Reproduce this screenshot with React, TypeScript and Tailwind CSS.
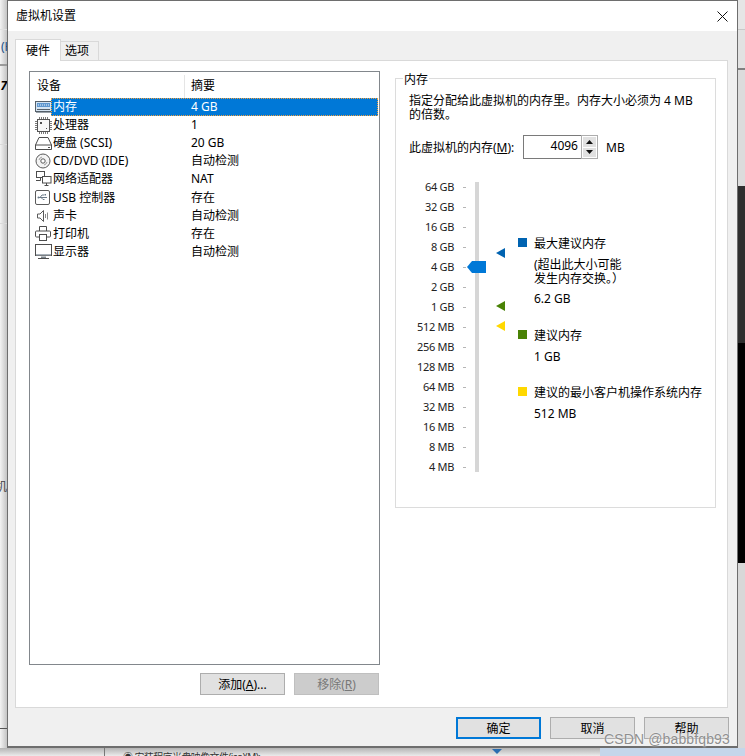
const FONT = "font-['Noto_Sans','Noto_Sans_CJK_SC',sans-serif]";

const Memory = () => (
  <svg width="17" height="13" viewBox="0 0 17 13" fill="none" className="shrink-0">
    <rect x="0.5" y="0.5" width="16" height="10" fill="#d5e4f2" stroke="#55606a" />
    <rect x="2" y="2" width="13" height="4" fill="#5f97cf" />
    <path d="M3 4h1M5 4h1M7 4h1M9 4h1M11 4h1M13 4h1" stroke="#eef5fb" />
    <path d="M2 8.5h13" stroke="#55606a" />
    <path d="M1 11.5h15" stroke="#9aa3ab" />
  </svg>
);
const Cpu = () => (
  <svg width="17" height="17" viewBox="0 0 17 17" fill="none" className="shrink-0">
    <rect x="2.5" y="2.5" width="12" height="12" fill="#f7f7f7" stroke="#555" />
    <path d="M4.5 0v2M6.5 0v2M8.5 0v2M10.5 0v2M12.5 0v2M4.5 15v2M6.5 15v2M8.5 15v2M10.5 15v2M12.5 15v2M0 4.5h2M0 6.5h2M0 8.5h2M0 10.5h2M0 12.5h2M15 4.5h2M15 6.5h2M15 8.5h2M15 10.5h2M15 12.5h2" stroke="#7a7a7a" />
    <rect x="5" y="5" width="2" height="2" fill="#4d4d4d" />
    <rect x="11" y="11" width="1" height="1" fill="#4d4d4d" />
  </svg>
);
const Disk = () => (
  <svg width="17" height="14" viewBox="0 0 17 14" fill="none" className="shrink-0">
    <path d="M4 1.5h9l3.5 7.5v4.5H.5V9z" fill="#fff" stroke="#4d4d4d" />
    <path d="M.5 9h16" stroke="#4d4d4d" />
    <path d="M13 11.5h2" stroke="#4d4d4d" />
  </svg>
);
const Cd = () => (
  <svg width="16" height="16" viewBox="0 0 16 16" fill="none" className="shrink-0">
    <circle cx="8" cy="8" r="7" fill="#f4f4f4" stroke="#5a5a5a" />
    <circle cx="8" cy="8" r="2.2" fill="#fff" stroke="#5a5a5a" />
    <path d="M4 7a4 4 0 0 1 3-3" stroke="#a0a0a0" />
    <path d="M12 9a4 4 0 0 1-3 3" stroke="#a0a0a0" />
  </svg>
);
const Net = () => (
  <svg width="17" height="16" viewBox="0 0 17 16" fill="none" className="shrink-0">
    <rect x="1.5" y="0.5" width="8" height="6" fill="#fff" stroke="#4d4d4d" />
    <path d="M3 9.5H1M5.5 7v2.5H3" stroke="#4d4d4d" />
    <rect x="7.5" y="5.5" width="8.5" height="6.5" fill="#fff" stroke="#4d4d4d" />
    <path d="M11.5 12v2.5M9.5 14.5h4" stroke="#4d4d4d" />
  </svg>
);
const Usb = () => (
  <svg width="15" height="15" viewBox="0 0 15 15" fill="none" className="shrink-0">
    <rect x="0.5" y="0.5" width="14" height="14" rx="1.5" fill="#fff" stroke="#5a5a5a" />
    <path d="M3 7.5h9M5 7.5l2-2.5h2M6 7.5l2 2h1.5" stroke="#6b7a88" />
    <circle cx="3.5" cy="7.5" r="1" fill="#6b7a88" />
    <rect x="9.5" y="4" width="1.5" height="1.5" fill="#6b7a88" />
  </svg>
);
const Sound = () => (
  <svg width="14" height="14" viewBox="0 0 14 14" fill="none" className="ml-[1px] shrink-0">
    <path d="M1.5 5h2.5l3.5-3.5v11L4 9H1.5z" fill="#fff" stroke="#5a5a5a" />
    <path d="M9.5 5v4M11.5 3.5v7" stroke="#8a8a8a" />
  </svg>
);
const Printer = () => (
  <svg width="16" height="15" viewBox="0 0 16 15" fill="none" className="shrink-0">
    <path d="M4.5 5V.5h7V5" fill="#fff" stroke="#4d4d4d" />
    <rect x="0.5" y="5" width="15" height="6" rx="1" fill="#fff" stroke="#4d4d4d" />
    <rect x="4.5" y="8.5" width="7" height="6" fill="#fff" stroke="#4d4d4d" />
  </svg>
);
const Monitor = () => (
  <svg width="17" height="16" viewBox="0 0 17 16" fill="none" className="shrink-0">
    <rect x="0.5" y="0.5" width="16" height="11" fill="#fff" stroke="#4d4d4d" />
    <rect x="1" y="10" width="15" height="1.5" fill="#a9b2ba" />
    <path d="M6 12.5h5v1.5H6z" fill="#7d868e" />
    <path d="M3 14.5h11" stroke="#4d4d4d" />
  </svg>
);

const devices = [
  { icon: <Memory />, name: "内存", value: "4 GB", selected: true },
  { icon: <Cpu />, name: "处理器", value: "1" },
  { icon: <Disk />, name: "硬盘 (SCSI)", value: "20 GB" },
  { icon: <Cd />, name: "CD/DVD (IDE)", value: "自动检测" },
  { icon: <Net />, name: "网络适配器", value: "NAT" },
  { icon: <Usb />, name: "USB 控制器", value: "存在" },
  { icon: <Sound />, name: "声卡", value: "自动检测" },
  { icon: <Printer />, name: "打印机", value: "存在" },
  { icon: <Monitor />, name: "显示器", value: "自动检测" },
];

const scale = ["64 GB", "32 GB", "16 GB", "8 GB", "4 GB", "2 GB", "1 GB", "512 MB", "256 MB", "128 MB", "64 MB", "32 MB", "16 MB", "8 MB", "4 MB"];

function Btn({ children, kind }: { children: React.ReactNode; kind?: "primary" | "disabled" }) {
  const cls =
    kind === "primary"
      ? "border-2 border-[#0078d7] bg-[#e1e1e1] text-black"
      : kind === "disabled"
        ? "border border-[#bfbfbf] bg-[#cccccc] text-[#787878]"
        : "border border-[#adadad] bg-[#e1e1e1] text-black";
  return <div className={`flex h-[22px] w-[85px] items-center justify-center pt-[1px] text-xs ${cls}`}>{children}</div>;
}

function Marker({ color, className }: { color: string; className: string }) {
  return (
    <svg width="9" height="10" viewBox="0 0 9 10" className={`absolute left-[21px] ${className}`}>
      <path d="M0 5 9 0v10z" fill={color} />
    </svg>
  );
}

function Legend({ color, children }: { color: string; children: React.ReactNode }) {
  return (
    <div className="flex items-start gap-[7px] h-[14px] leading-[14px] whitespace-nowrap">
      <span className={`mt-[1px] h-[9px] w-[9px] shrink-0 ${color}`} />
      <span>{children}</span>
    </div>
  );
}

export default function App() {
  return (
    <div className={`flex h-[756px] w-[745px] flex-col overflow-hidden bg-[#f0f0f0] text-xs text-black ${FONT}`}>
      <div className="flex h-[748px] shrink-0">
        {/* background window, left edge */}
        <div className="flex w-[7px] shrink-0 flex-col overflow-hidden bg-gradient-to-r from-[#f3f3f3] to-[#c4c4c4]">
          <div className="h-[30px] border-b border-[#e0e0e0]" />
          <div className="flex h-[36px] items-center justify-start whitespace-nowrap border-b-2 border-[#9a9a9a] pl-[1px] text-[#1a4f8a]">(H</div>
          <div className="flex h-[40px] items-center justify-end whitespace-nowrap font-bold italic text-black">7</div>
          <div className="h-[39px] border-b border-[#dadada]" />
          <div className="h-[79px] border-b border-[#dadada]" />
          <div className="flex h-[271px] items-end justify-end whitespace-nowrap text-[#444]">机</div>
          <div className="h-[234px] border-b border-[#555]" />
        </div>

        {/* dialog */}
        <div className="relative flex w-[731px] shrink-0 flex-col border border-b-2 border-[#6e6e6e] bg-[#f0f0f0]">
          <div className="flex h-[30px] shrink-0 items-center justify-between bg-white pl-[8px] pr-[9px]">
            <span>虚拟机设置</span>
            <svg width="11" height="11" viewBox="0 0 11 11" fill="none">
              <path d="M.5.5l10 10M10.5.5l-10 10" stroke="#111" />
            </svg>
          </div>

          <div className="flex flex-col pl-[7px] pr-[9px] pt-[7px]">
            {/* tabs */}
            <div className="flex h-[22px] items-end pt-[1px]">
              <div className="z-10 -mb-px flex h-[22px] w-[46px] items-center justify-center border border-b-0 border-[#d9d9d9] bg-white">硬件</div>
              <div className="flex h-[19px] w-[38px] items-center border border-b-0 border-l-0 border-[#d9d9d9] bg-[#f0f0f0] pl-[4px]">选项</div>
            </div>

            {/* tab panel */}
            <div className="flex h-[648px] gap-[15px] border border-[#d9d9d9] bg-white pl-[13px] pt-[9px]">
              <div className="flex w-[351px] shrink-0 flex-col pt-px">
                <div className="h-[594px] border border-[#82878c] bg-white pr-[1px]">
                  <div className="flex h-[26px] items-center pt-[2px]">
                    <div className="flex h-[23px] w-[154px] items-center pl-[7px]">设备</div>
                    <div className="flex h-[23px] items-center border-l border-[#e5e5e5] pl-[6px]">摘要</div>
                  </div>
                  {devices.map((d) => (
                    <div key={d.name} className="flex h-[18.1px] items-center pl-[5px]">
                      <div className="flex w-[16px] shrink-0 items-center justify-start">{d.icon}</div>
                      <div className={`flex h-[18px] flex-1 items-center ${d.selected ? "bg-[#0078d7] text-white outline-1 outline-dotted -outline-offset-1 outline-[#f0a040]" : ""}`}>
                        <span className="w-[133px] shrink-0 whitespace-nowrap pl-[2px]">{d.name}</span>
                        <span className="whitespace-nowrap pl-[7px]">{d.value}</span>
                      </div>
                    </div>
                  ))}
                </div>
                <div className="mt-[8px] flex justify-end gap-[9px] pr-[1px]">
                  <Btn>
                    <span>
                      添加(<span className="underline">A</span>)...
                    </span>
                  </Btn>
                  <Btn kind="disabled">
                    <span>
                      移除(<span className="underline">R</span>)
                    </span>
                  </Btn>
                </div>
              </div>

              <fieldset className="h-[438px] w-[321px] shrink-0 border border-[#dcdcdc] pl-[13px]">
                <legend className="-ml-[6px] h-[16px] px-[1px] leading-[20px]">内存</legend>
                <p className="mt-[8px] whitespace-nowrap leading-[14px]">
                  指定分配给此虚拟机的内存里。内存大小必须为 4 MB
                  <br />
                  的倍数。
                </p>
                <div className="mt-[13px] flex h-[24px] items-center">
                  <span className="w-[114px] whitespace-nowrap pt-[1px]">
                    此虚拟机的内存(<span className="underline">M</span>):
                  </span>
                  <div className="flex h-[24px] w-[59px] items-center justify-end border border-[#7a7a7a] pb-[3px] pr-[3px]">4096</div>
                  <div className="-ml-px flex h-[24px] w-[17px] flex-col justify-center gap-px border border-[#adadad] bg-white p-px">
                    <div className="flex h-[10px] items-center justify-center bg-[#e1e1e1]">
                      <svg width="7" height="4" viewBox="0 0 7 4"><path d="M3.5 0 7 4H0z" fill="#111" /></svg>
                    </div>
                    <div className="flex h-[10px] items-center justify-center bg-[#e1e1e1]">
                      <svg width="7" height="4" viewBox="0 0 7 4"><path d="M0 0h7L3.5 4z" fill="#111" /></svg>
                    </div>
                  </div>
                  <span className="ml-[8px] pt-[1px]">MB</span>
                </div>

                <div className="mt-[18px] flex items-start">
                  <div className="flex w-[57px] shrink-0 flex-col">
                    {scale.map((s) => (
                      <div key={s} className="flex h-[20px] items-center">
                        <span className="w-[45px] shrink-0 whitespace-nowrap text-right text-[11px] tracking-[-0.3px] text-[#222]">{s}</span>
                        <span className="ml-[9px] h-px w-[3px] bg-[#b5b5b5]" />
                      </div>
                    ))}
                  </div>
                  <div className="relative ml-[9px] mt-[5px] h-[290px] w-[4px] shrink-0 bg-[#d6d6d6]">
                    <svg width="19" height="12" viewBox="0 0 19 12" className="absolute -left-[8px] top-[79px]">
                      <path d="M0 6 5 0h14v12H5z" fill="#0078d7" />
                    </svg>
                    <Marker color="#0063b1" className="top-[66px]" />
                    <Marker color="#498205" className="top-[119px]" />
                    <Marker color="#ffd800" className="top-[139px]" />
                  </div>
                  <div className="ml-[39px] flex flex-col pt-[60px]">
                    <Legend color="bg-[#0063b1]">最大建议内存</Legend>
                    <div className="mt-[7px] whitespace-nowrap pl-[16px] leading-[14px]">
                      (超出此大小可能
                      <br />
                      发生内存交换。）
                    </div>
                    <div className="mt-[6px] pl-[16px] leading-[14px]">6.2 GB</div>
                    <div className="mt-[23px]">
                      <Legend color="bg-[#498205]">建议内存</Legend>
                    </div>
                    <div className="mt-[7px] pl-[16px] leading-[14px]">1 GB</div>
                    <div className="mt-[22px]">
                      <Legend color="bg-[#ffd800]">建议的最小客户机操作系统内存</Legend>
                    </div>
                    <div className="mt-[7px] pl-[16px] leading-[14px]">512 MB</div>
                  </div>
                </div>
              </fieldset>
            </div>

            {/* footer */}
            <div className="-mr-px flex justify-end gap-[9px] pt-[9px]">
              <Btn kind="primary">确定</Btn>
              <Btn>取消</Btn>
              <Btn>帮助</Btn>
            </div>
          </div>

          <span className="absolute left-[596px] top-[729px] whitespace-nowrap font-['Liberation_Sans',sans-serif] text-[14px] leading-[18px] tracking-[0.13px] text-[#8f8f8f] [text-shadow:0_0_2px_#ffffff]">
            CSDN @babbfqb93
          </span>
        </div>

        {/* background window, right edge */}
        <div className="flex w-[7px] shrink-0 flex-col">
          <div className="h-[30px] border-b border-[#c8c8c8] bg-[#e6e6e6]" />
          <div className="h-[40px] border-b-2 border-[#808080] bg-[#e2e2e2]" />
          <div className="h-[116px] bg-[#dcdcdc]" />
          <div className="h-[157px] bg-[#2e2e2e]" />
          <div className="h-[220px] bg-black" />
          <div className="flex-1 bg-[#d8d8d8]" />
        </div>
      </div>

      {/* background window, bottom edge */}
      <div className="flex h-[8px] shrink-0 overflow-hidden bg-gradient-to-b from-[#b4b4b4] to-[#ececec]">
        <div className="ml-[104px] w-[19px] shrink-0 border-l border-[#777]" />
        <span className="mt-[3px] w-[130px] shrink-0 whitespace-nowrap text-[10px] leading-[12px] tracking-[-0.6px] text-[#333]">◉ 安装程序光盘映像文件(iso)(M):</span>
        <div className="ml-[220px] mt-[1px] w-[24px] shrink-0">
          <svg width="10" height="5" viewBox="0 0 10 5" className="ml-[19px]"><path d="M0 0h10L5 5z" fill="#2a6db0" /></svg>
        </div>
        <div className="ml-auto h-full w-[145px] shrink-0 bg-[#c5d6ea]" />
      </div>
    </div>
  );
}
